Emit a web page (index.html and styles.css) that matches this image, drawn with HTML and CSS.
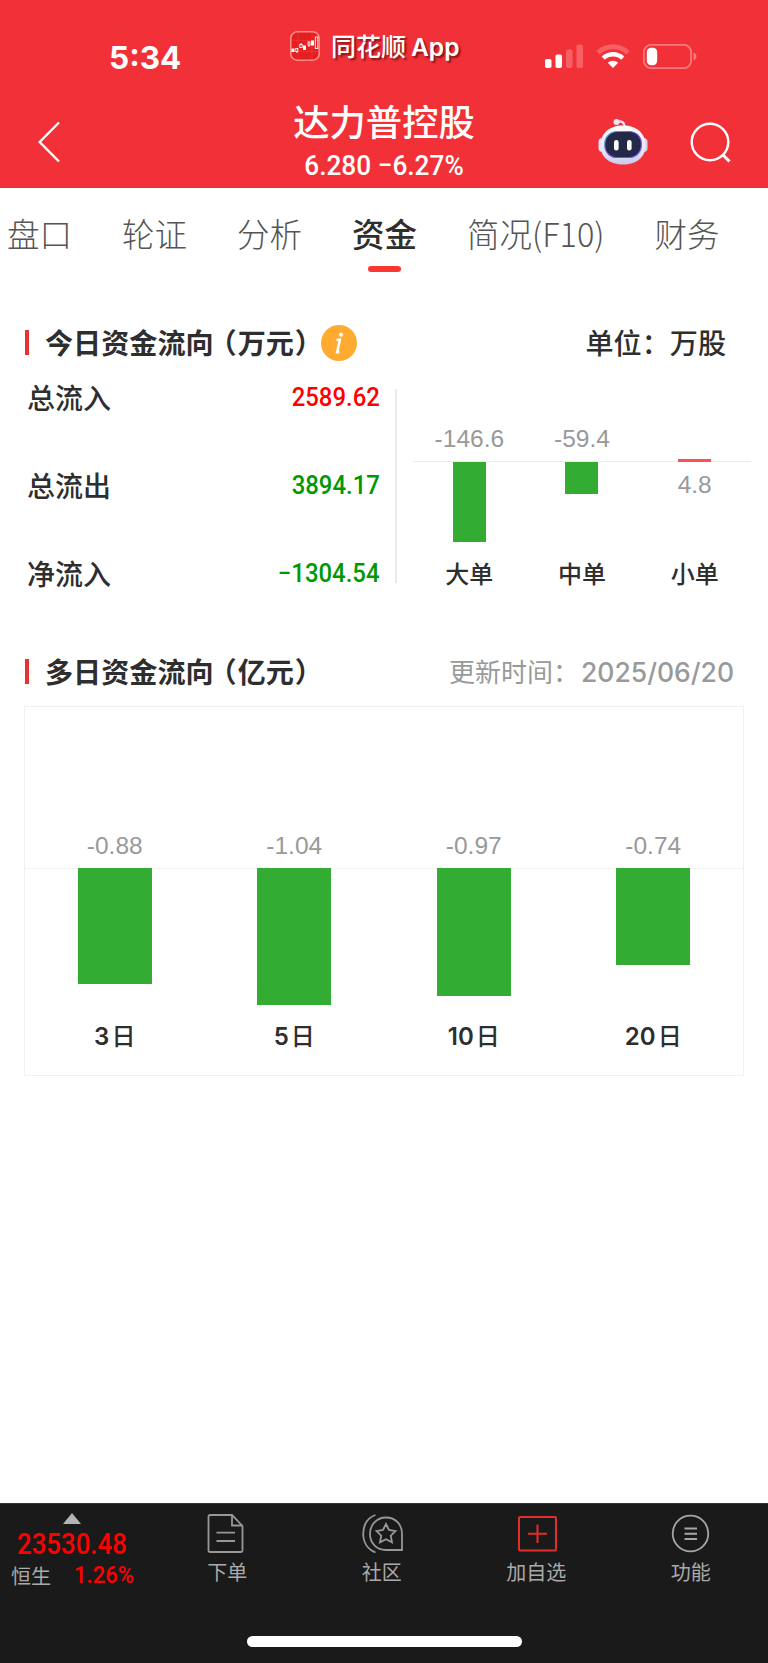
FILE: index.html
```html
<!DOCTYPE html>
<html lang="zh-CN">
<head>
    <meta charset="UTF-8">
    <meta name="viewport" content="width=device-width, initial-scale=1.0">
    <title>达力普控股 - 资金</title>
    <link rel="stylesheet" href="styles.css">
</head>
<body>
    <header class="header">
        <div class="status">
            <div class="time">5:34</div>
            <div class="app">
                <svg class="app-icon" width="30" height="30" viewBox="0 0 30 30">
                    <rect x="0.8" y="0.8" width="28.4" height="28.4" rx="6.5" fill="#e41f1f" stroke="#fa8b8b" stroke-width="1.6"/>
                    <path d="M2 9.5h26M2 20.5h26M8 2v26M22 2v26" stroke="#f04545" stroke-width="0.5"/>
                    <g fill="#fff"><rect x="1.5" y="17.5" width="3" height="3.5"/><rect x="13" y="14.5" width="3" height="4.5"/><rect x="21" y="9.5" width="3" height="5"/></g>
                    <g fill="none" stroke="#fff" stroke-width="0.9"><rect x="5.8" y="17.5" width="2" height="3"/><path d="M6.8 20.5v1.5M11 12v1.5M19 14v2"/><rect x="9.8" y="13.5" width="2.4" height="3"/><rect x="18" y="11" width="2" height="3"/><rect x="25.3" y="6" width="2.5" height="11.5"/></g>
                </svg>
                <span>同花顺<b>App</b></span>
            </div>
            <div class="signals">
                <svg width="38" height="24" viewBox="0 0 38 24">
                    <rect x="0" y="15" width="6.5" height="9" rx="1.8" fill="#fff"/>
                    <rect x="10.5" y="10.5" width="6.5" height="13.5" rx="1.8" fill="#fff"/>
                    <rect x="21" y="5.5" width="6.5" height="18.5" rx="1.8" fill="#f65f64"/>
                    <rect x="31.5" y="0.5" width="6.5" height="23.5" rx="1.8" fill="#f65f64"/>
                </svg>
                <svg width="34" height="24" viewBox="0 0 34 24">
                    <path d="M2 8.8a21.8 21.8 0 0 1 30 0" fill="none" stroke="#f65f64" stroke-width="5"/>
                    <path d="M7.2 14.2a14.2 14.2 0 0 1 19.6 0" fill="none" stroke="#fff" stroke-width="4.6"/>
                    <path d="M17 24l-5.2-5.2a7.6 7.6 0 0 1 10.4 0z" fill="#fff"/>
                </svg>
                <svg width="54" height="25" viewBox="0 0 54 25">
                    <rect x="0.9" y="0.9" width="47.2" height="23.2" rx="7.2" fill="none" stroke="#f7797d" stroke-width="1.8"/>
                    <rect x="3.8" y="3.8" width="10.4" height="17.4" rx="4.2" fill="#fff"/>
                    <path d="M50.5 8.5c2 .8 3 2.2 3 4s-1 3.200-3 4z" fill="#f7797d"/>
                </svg>
            </div>
        </div>
        <div class="nav">
            <svg class="back" width="24" height="42" viewBox="0 0 24 42"><path d="M21 1.500L1.700 21 21 40.500" fill="none" stroke="#fff" stroke-width="2.400"/></svg>
            <div class="stock">
                <h1>达力普控股</h1>
                <p class="num">6.280 −6.27%</p>
            </div>
            <div class="nav-icons">
                <svg width="50" height="48" viewBox="0 0 50 48">
                    <defs>
                        <linearGradient id="shell" x1="0" y1="0" x2="0" y2="1"><stop offset="0" stop-color="#fff"/><stop offset="0.7" stop-color="#e3e2f6"/><stop offset="1" stop-color="#c9c8ee"/></linearGradient>
                        <linearGradient id="rim" x1="0" y1="0" x2="1" y2="1"><stop offset="0" stop-color="#53c9d8"/><stop offset="0.5" stop-color="#7a3fe0"/><stop offset="1" stop-color="#5a6cf0"/></linearGradient>
                    </defs>
                    <path d="M19 4c4-1.500 7.500 0 7.500 5" fill="none" stroke="#ece9f8" stroke-width="2.200"/>
                    <circle cx="18.500" cy="4" r="3" fill="#e9e4f4"/>
                    <rect x="0.500" y="20" width="8" height="14" rx="4" fill="#e0dff5"/>
                    <rect x="41.500" y="20" width="8" height="14" rx="4" fill="#d5d4f3"/>
                    <path d="M25 7.500c14 0 22.500 8 22.500 20S38 46.500 25 46.500 2.500 39.500 2.500 27.500s8.500-20 22.500-20z" fill="url(#shell)"/>
                    <rect x="6.800" y="13.500" width="36.500" height="26" rx="12" fill="#24294a" stroke="url(#rim)" stroke-width="1.200"/>
                    <rect x="16" y="22" width="4.600" height="10.500" rx="2.300" fill="#fff"/>
                    <rect x="29" y="22" width="4.600" height="10.500" rx="2.300" fill="#fff"/>
                </svg>
                <svg width="42" height="42" viewBox="0 0 42 42"><g fill="none" stroke="#fff" stroke-width="2.400"><circle cx="20" cy="20" r="18.300"/><path d="M33 33l6.500 6.500" stroke-width="3"/></g></svg>
            </div>
        </div>
    </header>

    <nav class="tabs">
        <a>盘口</a>
        <a>轮证</a>
        <a>分析</a>
        <a class="active">资金</a>
        <a>简况(F10)</a>
        <a>财务</a>
    </nav>

    <main>
        <div class="section-title">
            <h2>今日资金流向<span class="open">（</span>万元<span class="close">）</span></h2>
            <svg class="info" width="36" height="36" viewBox="0 0 36 36">
                <circle cx="18" cy="18" r="18" fill="#ffab32"/>
                <circle cx="20" cy="9.800" r="2" fill="#fff"/>
                <path d="M15.500 14.800h3.300l-2.600 12.400h2.200" fill="none" stroke="#fff" stroke-width="2.600"/>
            </svg>
            <span class="unit">单位：万股</span>
        </div>

        <section class="today">
            <div class="flow">
                <div class="row"><span>总流入</span><span class="num red">2589.62</span></div>
                <div class="row"><span>总流出</span><span class="num green">3894.17</span></div>
                <div class="row"><span>净流入</span><span class="num green">−1304.54</span></div>
            </div>
            <div class="orders">
                <div class="order">
                    <div class="upper"><span class="val">-146.6</span></div>
                    <div class="lower"><div class="bar" style="height: 80px"></div></div>
                    <div class="name">大单</div>
                </div>
                <div class="order">
                    <div class="upper"><span class="val">-59.4</span></div>
                    <div class="lower"><div class="bar" style="height: 32px"></div></div>
                    <div class="name">中单</div>
                </div>
                <div class="order">
                    <div class="upper"><div class="bar up" style="height: 3px"></div></div>
                    <div class="lower"><span class="val">4.8</span></div>
                    <div class="name">小单</div>
                </div>
            </div>
        </section>

        <div class="section-title second">
            <h2>多日资金流向<span class="open">（</span>亿元<span class="close">）</span></h2>
            <span class="update">更新时间：<span class="date">2025/06/20</span></span>
        </div>

        <section class="days">
            <div class="day">
                <div class="upper"><span class="val">-0.88</span></div>
                <div class="lower"><div class="bar" style="height: 116px"></div></div>
                <div class="name">3<span>日</span></div>
            </div>
            <div class="day">
                <div class="upper"><span class="val">-1.04</span></div>
                <div class="lower"><div class="bar" style="height: 137px"></div></div>
                <div class="name">5<span>日</span></div>
            </div>
            <div class="day">
                <div class="upper"><span class="val">-0.97</span></div>
                <div class="lower"><div class="bar" style="height: 128px"></div></div>
                <div class="name">10<span>日</span></div>
            </div>
            <div class="day">
                <div class="upper"><span class="val">-0.74</span></div>
                <div class="lower"><div class="bar" style="height: 97px"></div></div>
                <div class="name">20<span>日</span></div>
            </div>
        </section>
    </main>

    <footer class="footer">
        <div class="menu">
            <div class="index">
                <svg width="18" height="11" viewBox="0 0 18 11"><path d="M9 0l9 11H0z" fill="#b4b4b4"/></svg>
                <div class="num point">23530.48</div>
                <div class="index-row"><span>恒生</span><span class="num pct">1.26%</span></div>
            </div>
            <div class="item">
                <svg width="42" height="40" viewBox="0 0 42 40"><g fill="none" stroke="#989898" stroke-width="1.800"><path d="M4 1h22l10.500 11v24.500a1.500 1.500 0 0 1-1.500 1.500H4a1.500 1.500 0 0 1-1.500-1.500V2.500A1.500 1.500 0 0 1 4 1z"/><path d="M26 1v10.500h10.500M10.500 18.700h18.500M10.500 27h18.500"/></g></svg>
                <span>下单</span>
            </div>
            <div class="item">
                <svg width="42" height="40" viewBox="0 0 42 40"><g fill="none" stroke="#989898" stroke-width="1.800" transform="translate(1)"><path d="M13.500 1C6 3.500 1.200 10.500 1.200 19.500S6 35.500 13.500 38.500"/><path d="M24 3.500c9.500 0 16 7 16 16.500v16h-16c-9.500 0-16-7-16-16s6.500-16.500 16-16.500z"/><path d="M24 10l3 6 6.500 1-4.700 4.700 1.200 6.600-6-3.100-6 3.100 1.200-6.600-4.700-4.700L21 16z"/></g></svg>
                <span>社区</span>
            </div>
            <div class="item">
                <svg width="42" height="40" viewBox="0 0 42 40"><g fill="none" stroke="#e32d2d" stroke-width="2"><rect x="4" y="3" width="37" height="33.500" rx="1"/><path d="M22.500 10.500v18.500M13 19.700h19"/></g></svg>
                <span>加自选</span>
            </div>
            <div class="item">
                <svg width="42" height="40" viewBox="0 0 42 40"><g fill="none" stroke="#a6a6a6" stroke-width="1.800"><circle cx="20.500" cy="19.500" r="17.800"/><path d="M14.500 14.500h12.500M14.500 19.700h12.500M14.500 24.900h12.500" stroke-width="2"/></g></svg>
                <span>功能</span>
            </div>
        </div>
        <div class="home-bar"></div>
    </footer>
</body>
</html>
```

FILE: styles.css
```css
* {
    box-sizing: border-box;
}
body {
    font-family: "Noto Sans CJK SC", sans-serif;
    background-color: #fff;
    color: #2e2e2e;
    margin: 0;
    height: 1663px;
    display: flex;
    flex-direction: column;
}
h1, h2, p {
    margin: 0;
}
svg {
    display: block;
    flex: none;
}
/* narrow digits */
.num {
    font-family: Roboto, sans-serif;
    font-weight: 500;
    white-space: nowrap;
    transform: scaleX(0.92);
}
.red {
    color: #ff0000;
}
.green {
    color: #009900;
}

/* header */
.header {
    height: 188px;
    background-color: #f23038;
    color: #fff;
}
.status {
    height: 96px;
    display: grid;
    grid-template-columns: 290px 255px 1fr;
}
.time {
    padding: 38px 0 0 109px;
    font: 700 31.5px/39px Inter, sans-serif;
}
.app {
    display: flex;
    gap: 11px;
    padding-top: 31px;
    font-size: 25px;
    font-weight: 500;
    line-height: 28px;
    text-shadow: 2px 2px 2px rgba(60, 0, 0, 0.6);
    white-space: nowrap;
}
.app b {
    font-family: Inter, sans-serif;
    font-weight: 600;
    font-size: 24.5px;
    margin-left: 5px;
}
.signals {
    display: flex;
    padding-top: 44px;
}
.signals svg + svg {
    margin-left: 13px;
}
.nav {
    height: 92px;
    display: grid;
    grid-template-columns: 197px 374px 197px;
}
.back {
    margin: 25px 0 0 38px;
}
.stock {
    text-align: center;
}
.stock h1 {
    font-size: 36.3px;
    font-weight: 500;
    line-height: 48px;
}
.stock p {
    margin-top: 3px;
    font-size: 28.5px;
    line-height: 38px;
    font-weight: 500;
    transform: scaleX(0.92);
}
.nav-icons {
    display: flex;
    align-items: flex-start;
    gap: 42px;
    padding: 22px 0 0 27px;
}
.nav-icons svg + svg {
    margin-top: 4px;
}

/* tabs */
.tabs {
    height: 112px;
    display: flex;
    gap: 50px;
    padding-left: 7px;
    font-size: 32.5px;
    font-weight: 300;
    line-height: 90px;
    color: #555;
    white-space: nowrap;
}
.tabs a.active {
    color: #2e2e2e;
    font-weight: 500;
    position: relative;
}
.tabs a.active::after {
    content: "";
    position: absolute;
    left: 16px;
    top: 78px;
    width: 33px;
    height: 6px;
    border-radius: 3px;
    background-color: #fb3731;
}

main {
    flex: 1;
}
.section-title {
    height: 86px;
    display: flex;
    align-items: center;
    padding: 0 42px 0 25px;
}
.section-title::before {
    content: "";
    width: 4px;
    height: 25px;
    margin: 0 16px 2px 0;
    background-color: #ea3131;
}
.section-title h2 {
    width: 276px;
    padding-bottom: 2px;
    font-size: 28.1px;
    font-weight: 700;
    line-height: 36px;
    white-space: nowrap;
}
/* half-width brackets */
.open, .close {
    font-feature-settings: "halt";
}
.open {
    margin: 0 1px 0 9px;
}
.close {
    margin-left: 1px;
}
.unit, .update {
    margin-left: auto;
    padding-bottom: 3px;
    font-size: 28.1px;
    font-weight: 500;
    white-space: nowrap;
}

/* today */
.today {
    height: 204px;
    display: flex;
}
.flow {
    width: 397px;
    height: 194px;
    margin-top: 3px;
    padding: 0 15px 0 27px;
    border-right: 2px solid #eaeaea;
    display: flex;
    flex-direction: column;
    justify-content: space-between;
}
.row {
    display: flex;
    justify-content: space-between;
    height: 18px;
    font-size: 28px;
    font-weight: 500;
    line-height: 17px;
}
.row .num {
    font-size: 26px;
    transform-origin: right;
}
.orders {
    width: 338px;
    margin-left: 16px;
    display: grid;
    grid-template-columns: repeat(3, 1fr);
}
.upper, .lower {
    display: flex;
    flex-direction: column;
    align-items: center;
}
.upper {
    justify-content: flex-end;
    border-bottom: 1px solid #ebebeb;
}
.val {
    font-family: "Liberation Sans", sans-serif;
    font-size: 24.5px;
    line-height: 28px;
    color: #999;
}
.upper .val {
    margin-bottom: 8px;
}
.bar {
    width: 33px;
    background-color: #33ac33;
}
.bar.up {
    margin-bottom: -1px;
    background-color: #fa5252;
}
.order .upper {
    height: 76px;
}
.order .lower {
    height: 94px;
}
.order .lower .val {
    margin-top: 9px;
}
.name {
    text-align: center;
    font-size: 24px;
    font-weight: 500;
    line-height: 36px;
}
.order .name {
    line-height: 34px;
}

/* multi day */
.section-title.second {
    height: 84px;
    padding: 0 34px 0 25px;
    margin-top: 40px;
}
.update {
    font-size: 26px;
    font-weight: 400;
    color: #999;
}
.date {
    font-family: Inter, sans-serif;
    font-weight: 500;
    font-size: 26.5px;
    margin-left: 2px;
}
.days {
    height: 370px;
    margin: -8px 24px 0;
    border: 1px solid #f0f0f0;
    display: grid;
    grid-template-columns: repeat(4, 1fr);
}
.day .upper {
    height: 162px;
    border-color: #f2f2f2;
}
.day .lower {
    height: 150px;
}
.day .bar {
    width: 74px;
    margin-top: -1px;
}
.day .name {
    font-family: Inter, "Noto Sans CJK SC", sans-serif;
    font-weight: 600;
}
.day .name span {
    font-weight: 500;
    margin-left: 2px;
}

/* footer */
.footer {
    height: 160px;
    background-color: #1a1a1a;
    border-top: 1px solid #333;
    color: #aaa;
    font-size: 20px;
    line-height: 24px;
}
.menu {
    height: 132px;
    display: grid;
    grid-template-columns: 150px repeat(4, 1fr);
}
.index {
    padding-top: 9px;
}
.index svg {
    margin-left: 63px;
}
.index .num {
    color: #ff0000;
    transform-origin: left;
}
.index .point {
    margin: 3px 0 0 17px;
    font-size: 29px;
    line-height: 34px;
    transform: scaleX(0.89);
}
.index-row {
    display: flex;
    padding: 3px 0 0 11px;
}
.index-row .pct {
    margin: -1px 0 0 23px;
    font-size: 24px;
}
.item {
    display: flex;
    flex-direction: column;
    align-items: center;
    padding-top: 10px;
    white-space: nowrap;
}
.item span {
    margin-top: 6px;
}
.home-bar {
    width: 275px;
    height: 11px;
    margin-left: 247px;
    border-radius: 6px;
    background-color: #fff;
}
```
